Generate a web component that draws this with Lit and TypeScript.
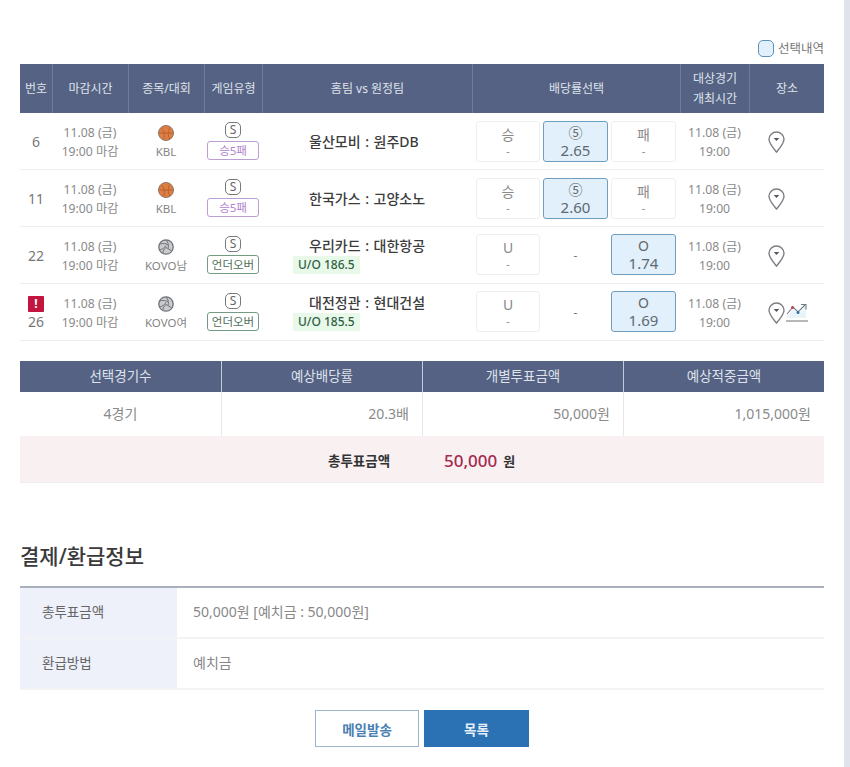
import { LitElement, html, css, svg } from "lit";
import { customElement } from "lit/decorators.js";

const basket = html`<svg class="sport" viewBox="0 0 16 16"><circle cx="8" cy="8" r="7.500" fill="#dd7f45" stroke="#8f7668" stroke-width="1"/><path d="M3 3c3 2 4 6 3 11M12 2.500c-2 3-2.500 8 0 11.500M1 8h14" fill="none" stroke="#b3592a" stroke-width=".8"/></svg>`;
const volley = html`<svg class="sport" viewBox="0 0 16 16"><circle cx="8" cy="8" r="7.200" fill="#c9cbce" stroke="#6f7276" stroke-width="1.300"/><path d="M8 1c2.500 2.500 3 6 2 8.500M2 5c3-1 6-.5 8 1M1.500 11c2.500-.5 5-2 6.500-4.500M5 14c0-2 1-4 3-5.500 2 1 4 2.500 5.500 3" fill="none" stroke="#6f7276" stroke-width="1"/></svg>`;
const pin = svg`<path d="M8.500 1C4.300 1 1 4.300 1 8.200c0 4.300 4.700 9.300 7.500 12.800C11.300 17.500 16 12.500 16 8.200 16 4.300 12.700 1 8.500 1z" fill="#fff" stroke="#7c7f83" stroke-width="1.400"/><path d="M5.700 7h5.600L8.500 10z" fill="#55585c"/>`;
const pinIcon = html`<svg class="pin" viewBox="0 0 17 22">${pin}</svg>`;
const chart = html`<svg class="chart" viewBox="0 0 22 22"><path d="M1 15 7 7l5 6 8-9v12H1z" fill="#e9f3fa"/><path d="M1 12 7 5l5 5 7-7" fill="none" stroke="#6f7c88" stroke-width="1.100"/><path d="M15 2.500h5v5" fill="none" stroke="#6f7c88" stroke-width="1.100"/><circle cx="6.500" cy="5.500" r="1.500" fill="#c0414f"/><circle cx="12" cy="10.500" r="1.500" fill="#2f6fa8"/><path d="M0 19h22" stroke="#85888c" stroke-width="1.200"/></svg>`;

type Row = {
  no: string; alert?: boolean; sport: "b" | "v"; league: string; tag: string; green?: boolean;
  teams: string; uo?: string; odds: [string, string, string, string, string, string]; pick: number; noDraw?: boolean; chart?: boolean;
};

const rows: Row[] = [
  { no: "6", sport: "b", league: "KBL", tag: "승5패", teams: "울산모비 : 원주DB", odds: ["승", "-", "⑤", "2.65", "패", "-"], pick: 1 },
  { no: "11", sport: "b", league: "KBL", tag: "승5패", teams: "한국가스 : 고양소노", odds: ["승", "-", "⑤", "2.60", "패", "-"], pick: 1 },
  { no: "22", sport: "v", league: "KOVO남", tag: "언더오버", green: true, teams: "우리카드 : 대한항공", uo: "U/O 186.5", odds: ["U", "-", "", "-", "O", "1.74"], pick: 2, noDraw: true },
  { no: "26", alert: true, sport: "v", league: "KOVO여", tag: "언더오버", green: true, teams: "대전정관 : 현대건설", uo: "U/O 185.5", odds: ["U", "-", "", "-", "O", "1.69"], pick: 2, noDraw: true, chart: true },
];

@customElement("app-root")
export class AppRoot extends LitElement {
  static styles = css`
    :host { display: block; width: 850px; height: 767px; overflow: hidden; background: #fff;
      font-family: "Noto Sans", "Noto Sans CJK KR", sans-serif; color: #888; }
    .shell { display: grid; grid-template-columns: 1fr 6px; height: 767px; }
    .gutter { background: #e0e3ec; }
    .page { display: flex; flex-direction: column; width: 804px; padding: 39px 0 0 20px; }
    .legend { display: flex; justify-content: flex-end; align-items: center; gap: 4px; height: 18px; margin-bottom: 7px;
      font-size: 12.500px; color: #777; }
    .legend .label { margin-top: -2px; }
    .swatch { width: 14px; height: 15px; border: 1px solid #5c93b8; border-radius: 5px; background: #e1f0fb; }

    .grid { display: grid; grid-template-columns: 32px 76px 76px 58px 210px 208px 69px 75px; }
    .hd { height: 49px; background: #556283; display: flex; align-items: center; justify-content: center; text-align: center;
      font-size: 12px; line-height: 20px; color: #dfe2ec; border-left: 1px solid #6f7b98; box-sizing: border-box; }
    .hd:first-child { border-left: 0; }

    .row { display: grid; grid-template-columns: 32px 76px 76px 58px 210px 208px 69px 75px; height: 57px; border-bottom: 1px solid #eeeff1; box-sizing: border-box; }
    .c { display: flex; flex-direction: column; align-items: center; justify-content: center; font-size: 12.200px; line-height: 19px; color: #8a8a8a; min-width: 0; box-sizing: border-box; }
    .c span { white-space: nowrap; }
    .down { padding-top: 2px; }
    .no { font-size: 14px; color: #777; line-height: 20px; padding-top: 2px; }
    .no.flagged { padding-top: 4px; }
    .alert { width: 16px; height: 16px; background: #c2143f; border-radius: 1px; color: #fff; font-size: 12px; font-weight: 700; line-height: 16px; text-align: center; }
    .sport { width: 16px; height: 16px; display: block; margin-bottom: 2.500px; }
    .league { font-size: 11.500px; line-height: 15px; color: #858585; white-space: nowrap; }
    .s { width: 14px; height: 14px; border: 1px solid #77797c; border-radius: 5px; font-size: 12px; line-height: 14px; text-align: center; color: #666; margin-bottom: 3px; }
    .tag { width: 52px; height: 19px; box-sizing: border-box; border: 1px solid #bb9fd2; border-radius: 3px; background: #fff; font-size: 11.500px; line-height: 17px; text-align: center; color: #b282cf; white-space: nowrap; }
    .tag.green { border-color: #739c85; color: #4f6f5c; }
    .teams { align-self: flex-start; margin-left: 47px; font-size: 14px; font-weight: 500; color: #3c3c3c; line-height: 20px; white-space: nowrap; word-spacing: 1px; }
    .teamcell { padding-top: 1px; }
    .teamcell.has-uo { justify-content: flex-start; padding-top: 9px; }
    .uo { align-self: flex-start; margin-left: 31px; height: 18px; padding: 0 5px; background: #e8f9e9; font-size: 12px; font-weight: 500; line-height: 18px; color: #2f5f45; white-space: nowrap; }
    .odds { display: grid; grid-template-columns: 64px 65px 65px; gap: 3px; padding: 8px 0 0 4px; }
    .odds.tight { padding-top: 7px; }
    .o { height: 41px; box-sizing: border-box; border: 1px solid #eeeff1; border-radius: 3px; display: flex; flex-direction: column; align-items: center; justify-content: center; padding-top: 1px; font-size: 14px; line-height: 17px; color: #8a8a8a; }
    .o .v { font-size: 11px; line-height: 15px; }
    .o.pick { background: #e1f0fb; border-color: #6e9fc0; color: #666; padding-top: 0; }
    .o.pick .v { font-size: 15px; line-height: 18px; color: #5d6a74; }
    .o.empty { border-color: transparent; font-size: 12px; color: #777; }
    .venue { flex-direction: row; justify-content: flex-start; padding: 1px 0 0 19px; gap: 1px; }
    .pin { width: 17px; height: 22px; display: block; }
    .chart { width: 22px; height: 22px; display: block; flex: none; }

    .sum { margin-top: 20px; display: grid; grid-template-columns: repeat(4, 201px); }
    .sh { height: 31px; background: #556283; color: #dfe2ec; font-size: 13.500px; line-height: 31px; text-align: center; border-left: 1px solid #c4cadb; box-sizing: border-box; }
    .sh:first-child { border-left: 0; }
    .sd { height: 44px; box-sizing: border-box; border-left: 1px solid #e6e7ea; font-size: 14px; line-height: 44px; color: #8a8a8a; text-align: right; padding-right: 13px; }
    .sd.first { border-left: 0; text-align: center; padding-right: 0; }
    .total { height: 47px; background: #f9f0f2; border-bottom: 1px solid #f1edef; box-sizing: border-box; display: flex; align-items: center; padding: 2px 0 0 308px; }
    .total b { font-size: 13.500px; font-weight: 700; color: #333; width: 116px; }
    .total strong { font-size: 17px; font-weight: 500; color: #a52a4d; margin-right: 6px; }
    .total i { font-style: normal; font-size: 13px; font-weight: 700; color: #333; }

    h2 { margin: 58px 0 0; height: 30px; font-size: 21px; line-height: 30px; font-weight: 500; color: #3a3a3a; }
    .info { margin-top: 15px; border-top: 2px solid #aab0bd; }
    .ir { display: grid; grid-template-columns: 157px 1fr; height: 51px; box-sizing: border-box; border-bottom: 2px solid #f3f3f5; font-size: 14px; line-height: 48px; }
    .ir div:first-child { background: #eef1fa; color: #666; padding-left: 22px; font-size: 13.500px; }
    .ir div:last-child { color: #888; padding-left: 16px; }
    .btns { display: flex; justify-content: center; gap: 5px; margin-top: 20px; }
    .btn { width: 104px; height: 37px; box-sizing: border-box; font: inherit; font-size: 13.500px; font-weight: 700; border-radius: 0; padding: 0; }
    .btn.line { background: #fff; border: 1px solid #9bb7cf; color: #4a81b3; }
    .btn.fill { width: 105px; background: #2b72b5; border: 1px solid #2b72b5; color: #e6eff8; }
  `;

  private oddsCell(r: Row, i: number) {
    const a = r.odds[i * 2], b = r.odds[i * 2 + 1];
    if (i === 1 && r.noDraw) return html`<div class="o empty">-</div>`;
    return html`<div class="o ${r.pick === i ? "pick" : ""}"><span>${a}</span><span class="v">${b}</span></div>`;
  }

  render() {
    const heads = ["번호", "마감시간", "종목/대회", "게임유형", "홈팀 vs 원정팀", "배당률선택"];
    const values = ["4경기", "20.3배", "50,000원", "1,015,000원"];
    return html`<div class="shell"><div class="page">
      <div class="legend"><span class="swatch"></span><span class="label">선택내역</span></div>
      <div class="grid">
        ${heads.map((h) => html`<div class="hd">${h}</div>`)}
        <div class="hd">대상경기<br />개최시간</div>
        <div class="hd">장소</div>
      </div>
      ${rows.map((r) => html`<div class="row">
        <div class="c no ${r.alert ? "flagged" : ""}">${r.alert ? html`<div class="alert">!</div>` : ""}${r.no}</div>
        <div class="c down"><span>11.08 (금)</span><span>19:00 마감</span></div>
        <div class="c down">${r.sport === "b" ? basket : volley}<span class="league">${r.league}</span></div>
        <div class="c"><div class="s">S</div><div class="tag ${r.green ? "green" : ""}">${r.tag}</div></div>
        <div class="c teamcell ${r.uo ? "has-uo" : ""}"><div class="teams">${r.teams}</div>${r.uo ? html`<div class="uo">${r.uo}</div>` : ""}</div>
        <div class="odds ${r.noDraw ? "tight" : ""}">${[0, 1, 2].map((i) => this.oddsCell(r, i))}</div>
        <div class="c down"><span>11.08 (금)</span><span>19:00</span></div>
        <div class="c venue">${pinIcon}${r.chart ? chart : ""}</div>
      </div>`)}
      <div class="sum">
        ${["선택경기수", "예상배당률", "개별투표금액", "예상적중금액"].map((h) => html`<div class="sh">${h}</div>`)}
        ${values.map((d, i) => html`<div class="sd ${i === 0 ? "first" : ""}">${d}</div>`)}
      </div>
      <div class="total"><b>총투표금액</b><strong>50,000</strong><i>원</i></div>
      <h2>결제/환급정보</h2>
      <div class="info">
        <div class="ir"><div>총투표금액</div><div>50,000원 [예치금 : 50,000원]</div></div>
        <div class="ir"><div>환급방법</div><div>예치금</div></div>
      </div>
      <div class="btns"><button class="btn line">메일발송</button><button class="btn fill">목록</button></div>
    </div><div class="gutter"></div></div>`;
  }
}
